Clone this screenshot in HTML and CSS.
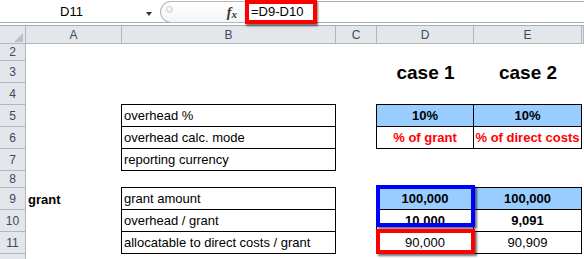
FILE: index.html
```html
<!DOCTYPE html>
<html>
<head>
<meta charset="utf-8">
<title>Sheet</title>
<link rel="stylesheet" href="styles.css">
</head>
<body>
<div class="app">
  <div class="fbar">
    <div class="namebox"><span class="name">D11</span><span class="caret"></span></div>
    <div class="pill"><span class="knob"></span><span class="fx">f<span class="fx-x">x</span></span></div>
    <div class="formula">=D9-D10</div>
    <div class="mark-formula"></div>
  </div>
  <div class="sep"></div>
  <div class="sheet">
    <div class="corner"><span class="tri"></span></div>
    <div class="ch">A</div>
    <div class="ch">B</div>
    <div class="ch">C</div>
    <div class="ch">D</div>
    <div class="ch">E</div>
    <div class="ch"></div>

    <div class="rh r2">2</div>
    <div class="rh r3">3</div>
    <div class="rh r4">4</div>
    <div class="rh r5">5</div>
    <div class="rh r6">6</div>
    <div class="rh r7">7</div>
    <div class="rh r8">8</div>
    <div class="rh r9">9</div>
    <div class="rh r10">10</div>
    <div class="rh r11">11</div>
    <div class="rh r12">12</div>

    <div class="cell case colD r3">case 1</div>
    <div class="cell case colE r3">case 2</div>

    <div class="box boxB rows5">
      <div class="bc">overhead %</div>
      <div class="bc">overhead calc. mode</div>
      <div class="bc">reporting currency</div>
    </div>

    <div class="box boxDE rows5s">
      <div class="bc ctr b blue">10%</div>
      <div class="bc ctr b blue">10%</div>
      <div class="bc ctr b red">% of grant</div>
      <div class="bc ctr b red">% of direct costs</div>
    </div>

    <div class="cell b colA r9">grant</div>

    <div class="box boxB rows9">
      <div class="bc">grant amount</div>
      <div class="bc">overhead / grant</div>
      <div class="bc">allocatable to direct costs / grant</div>
    </div>

    <div class="box boxDE3 rows9">
      <div class="bc ctr b blue">100,000</div>
      <div class="bc ctr b blue">100,000</div>
      <div class="bc ctr b">10,000</div>
      <div class="bc ctr b">9,091</div>
      <div class="bc ctr">90,000</div>
      <div class="bc ctr">90,909</div>
    </div>

    <div class="mark mark-blue"></div>
    <div class="mark mark-red"></div>
  </div>
</div>
</body>
</html>
```

FILE: styles.css
```css
* { box-sizing: border-box; }

body {
  margin: 0;
  width: 584px;
  height: 259px;
  overflow: hidden;
  background: #fff;
  font-family: "Liberation Sans", Arial, sans-serif;
  font-size: 13px;
  color: #000;
}

.app { position: relative; }

/* formula bar */
.fbar {
  display: flex;
  height: 22px;
  background: #fff;
}

.namebox {
  width: 158px;
  display: flex;
  align-items: center;
}

.name {
  width: 143px;
  text-align: center;
  padding-top: 1px;
}

.caret {
  width: 0;
  height: 0;
  margin-left: 3px;
  margin-top: 5px;
  border-left: 3px solid transparent;
  border-right: 3px solid transparent;
  border-top: 4px solid #333;
}

.pill {
  margin-left: 2px;
  margin-top: 1px;
  width: 85px;
  height: 22px;
  flex: none;
  display: flex;
  align-items: flex-start;
  border: 1px solid #b4b8be;
  border-right: none;
  border-radius: 11px 0 0 11px;
  background: linear-gradient(#ffffff, #f4f5f7);
}

.knob {
  width: 7px;
  height: 7px;
  margin-left: 5px;
  margin-top: 4px;
  border-radius: 50%;
  border: 1px solid #cdd0d4;
  background: radial-gradient(circle at 40% 35%, #ffffff, #d9dcdf);
}

.fx {
  margin-left: auto;
  margin-right: 8px;
  margin-top: 3px;
  font-family: "Liberation Serif", "Times New Roman", serif;
  font-style: italic;
  font-weight: bold;
  font-size: 14px;
  color: #333;
  line-height: 16px;
}

.fx-x {
  font-size: 11px;
  position: relative;
  top: 1px;
}

.formula {
  flex: 1;
  margin-top: 1px;
  border-top: 1px solid #a9adb3;
  padding-left: 6px;
  line-height: 20px;
  white-space: nowrap;
}

.mark-formula {
  position: absolute;
  left: 245px;
  top: 0;
  width: 72px;
  height: 24px;
  border: 4px solid #ff0000;
  box-shadow: 1px 2px 2px rgba(0, 0, 0, 0.55);
}

.sep {
  height: 4px;
  border-top: 1px solid #a9adb3;
  border-bottom: 1px solid #a9adb3;
}

/* sheet grid */
.sheet {
  display: grid;
  grid-template-columns: 26px 96px 214px 41px 97px 108px 1fr;
  grid-template-rows: 18px 17px 22px 22px 22px 22px 22px 17px 22px 22px 22px 22px;
}

.corner,
.ch,
.rh {
  background: #e3e6ea;
  border-right: 1px solid #b3b7bd;
  border-bottom: 1px solid #b3b7bd;
  color: #3d4a5a;
  font-size: 12px;
}

.corner {
  display: flex;
  justify-content: flex-end;
  align-items: flex-end;
  padding: 0 2px 1px 0;
}

.tri {
  width: 0;
  height: 0;
  border-left: 9px solid transparent;
  border-bottom: 9px solid #bcc0c6;
}

.ch {
  text-align: center;
  padding-top: 1px;
  line-height: 17px;
}

.rh {
  grid-column: 1;
  display: flex;
  align-items: center;
  justify-content: center;
}

.r2 { grid-row: 2; }
.r3 { grid-row: 3; }
.r4 { grid-row: 4; }
.r5 { grid-row: 5; }
.r6 { grid-row: 6; }
.r7 { grid-row: 7; }
.r8 { grid-row: 8; }
.r9 { grid-row: 9; }
.r10 { grid-row: 10; }
.r11 { grid-row: 11; }
.r12 { grid-row: 12; }

.colA { grid-column: 2; }
.colD { grid-column: 5; }
.colE { grid-column: 6; }

.cell {
  display: flex;
  align-items: center;
  padding-left: 2px;
  white-space: nowrap;
}

.case {
  display: block;
  padding: 2px 0 0;
  text-align: center;
  font-size: 19px;
  font-weight: bold;
  line-height: 20px;
}

/* bordered blocks: black background showing through 1px gaps */
.box {
  display: grid;
  gap: 1px;
  padding: 1px;
  background: #000;
  margin: -1px 0 0 -1px;
}

.boxB {
  grid-column: 3;
  grid-template-rows: repeat(3, 1fr);
}

.boxDE {
  grid-column: 5 / 7;
  grid-template-columns: 96px 1fr;
  grid-template-rows: repeat(2, 1fr);
}

.boxDE3 {
  grid-column: 5 / 7;
  grid-template-columns: 96px 1fr;
  grid-template-rows: repeat(3, 1fr);
}

.rows5 { grid-row: 5 / 8; }
.rows5s { grid-row: 5 / 7; }
.rows9 { grid-row: 9 / 12; }

.bc {
  background: #fff;
  display: flex;
  align-items: center;
  padding-left: 2px;
  white-space: nowrap;
  overflow: hidden;
}

.ctr { justify-content: center; padding-left: 0; }
.b { font-weight: bold; }
.blue { background: #99ccff; }
.red { color: #ff0000; }

/* annotation rectangles drawn over the cells */
.mark {
  grid-column: 5;
  border: 4px solid;
  box-shadow: 2px 2px 2px rgba(0, 0, 0, 0.55);
  z-index: 2;
}

.mark-blue {
  grid-row: 9 / 11;
  border-color: #0000ff;
  margin: -3px -1px 5px -1px;
}

.mark-red {
  grid-row: 11;
  border-color: #ff0000;
  margin: -3px -1px 0 -1px;
}
```
